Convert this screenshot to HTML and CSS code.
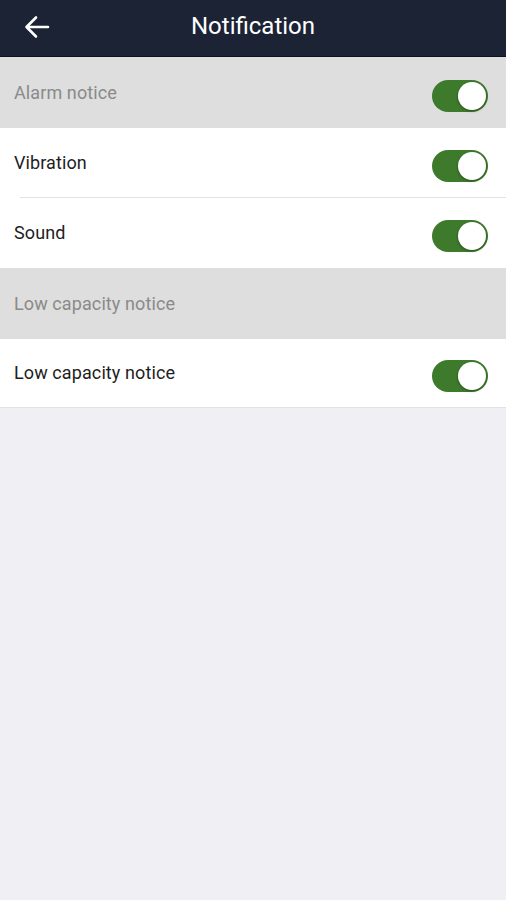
FILE: index.html
```html
<!DOCTYPE html>
<html>
<head>
<meta charset="utf-8">
<link rel="stylesheet" href="styles.css">
</head>
<body>
<div class="header">
  <div class="back">
    <svg width="30" height="30" viewBox="0 0 30 30"><path d="M26 15H5M14 5.5L4.5 15 14 24.5" fill="none" stroke="#fff" stroke-width="2.6" stroke-linecap="round" stroke-linejoin="round"/></svg>
  </div>
  <div class="title">Notification</div>
</div>
<div class="section"><span class="label">Alarm notice</span><span class="switch"><span class="knob"></span></span></div>
<div class="row sep"><span class="label">Vibration</span><span class="switch"><span class="knob"></span></span></div>
<div class="row"><span class="label">Sound</span><span class="switch"><span class="knob"></span></span></div>
<div class="section"><span class="label">Low capacity notice</span></div>
<div class="row last"><span class="label">Low capacity notice</span><span class="switch"><span class="knob"></span></span></div>
</body>
</html>
```
FILE: styles.css
```css
html, body { margin: 0; padding: 0; }
body {
  background: #efeff4;
  font-family: Roboto, "Noto Sans", sans-serif;
  width: 506px;
  height: 900px;
}
.header {
  height: 57px;
  background: #1b2335;
  display: flex;
  align-items: center;
  position: relative;
  border-bottom: 1px solid #0d1220;
  padding-bottom: 4px;
  box-sizing: border-box;
}
.back {
  position: absolute;
  left: 22px;
  top: 12px;
  width: 30px;
  height: 30px;
}
.title {
  flex: 1;
  text-align: center;
  color: #fff;
  font-size: 24px;
}
.section, .row {
  height: 70px;
  display: flex;
  align-items: center;
  justify-content: space-between;
  padding: 0 18px 0 14px;
  box-sizing: border-box;
}
.section {
  background: #dedede;
  height: 71px;
}
.section .label { color: #8a8a8a; font-size: 18px; }
.row { background: #fff; position: relative; }
.row .label { color: #1e1e1e; font-size: 18px; }
.label { margin-top: -1px; letter-spacing: 0.1px; }
.row.sep::after {
  content: "";
  position: absolute;
  left: 20px;
  right: 0;
  bottom: 0;
  height: 1px;
  background: #e3e3e3;
}
.row.last { border-bottom: 1px solid #e2e2e2; height: 69px; }
.switch {
  width: 56px;
  height: 32px;
  border-radius: 16px;
  background: #3e7a2c;
  position: relative;
  box-sizing: border-box;
  margin-top: 6px;
}
.knob {
  position: absolute;
  right: 2px;
  top: 2px;
  width: 28px;
  height: 28px;
  border-radius: 50%;
  background: #fff;
  box-shadow: 0 1px 3px rgba(0,0,0,0.35);
}
```
